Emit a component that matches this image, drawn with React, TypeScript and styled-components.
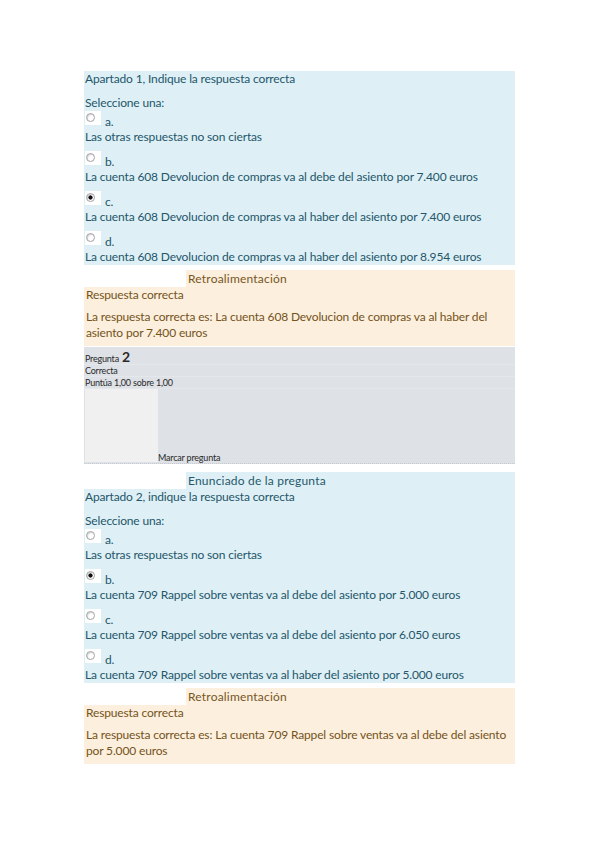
import styled, { createGlobalStyle } from "styled-components";

const GlobalStyle = createGlobalStyle`
  html, body {
    margin: 0;
    padding: 0;
    background: #ffffff;
  }
  body {
    font-family: Lato, "Open Sans", "Liberation Sans", sans-serif;
  }
`;

interface IOption {
  letter: string;
  text: string;
  checked?: boolean;
}

interface IQuestion {
  title: string;
  options: IOption[];
  answer: string[];
}

const Page = styled.div`
  width: 431px;
  margin-left: 84px;
  padding-top: 71px;
  padding-bottom: 80px;
`;

const Tab = styled.div<{ $tone: "info" | "feedback" }>`
  margin-left: 102px;
  height: 17px;
  line-height: 18px;
  padding-left: 2px;
  font-size: 12px;
  letter-spacing: 0.2px;
  color: ${(p) => (p.$tone === "info" ? "#27586a" : "#77561f")};
  background: ${(p) => (p.$tone === "info" ? "#def0f6" : "#fcefdd")};
`;

const Formulation = styled.div`
  background: #def0f6;
  color: #24566a;
  font-size: 12px;
  line-height: 16px;
  letter-spacing: -0.15px;
  padding: 0 2px 0 1px;
`;

const Prompt = styled.p`
  margin: 0 0 8px;
`;

const SelectLabel = styled.p`
  margin: 0;
`;

const Option = styled.div`
  margin-bottom: 6px;

  &:last-child {
    margin-bottom: 0;
  }
`;

const OptionHead = styled.div`
  display: flex;
  align-items: flex-start;
  height: 18px;
`;

const RadioBox = styled.span`
  width: 16px;
  height: 14px;
  background: #ffffff;
  display: flex;
  align-items: center;
  padding-left: 1px;
  box-sizing: border-box;
`;

const Radio = styled.span<{ $checked?: boolean }>`
  width: 7px;
  height: 7px;
  margin-top: -2px;
  border-radius: 50%;
  border: 1px solid #a3a3a3;
  background: radial-gradient(
    circle,
    ${(p) => (p.$checked ? "#111 0, #111 1.8px, #fff 2.4px" : "#fff 0")}
  );
  box-shadow: inset 1px 1px 1px rgba(0, 0, 0, 0.18);
`;

const Letter = styled.span`
  margin: 3px 0 0 4px;
`;

const OptionText = styled.div`
  white-space: nowrap;
`;

const Feedback = styled.div`
  background: #fcefdd;
  color: #74531c;
  font-size: 12px;
  line-height: 16px;
  padding: 0 2px 5px 2px;
`;

const FeedbackLine = styled.p<{ $last?: boolean }>`
  margin: 0 0 ${(p) => (p.$last ? 0 : 6)}px;
  white-space: nowrap;
  letter-spacing: -0.15px;
`;

const Gap = styled.div<{ $h: number }>`
  height: ${(p) => p.$h}px;
`;

const Info = styled.div`
  background: #dee1e6;
  color: #2a2a2a;
  font-size: 9px;
  letter-spacing: -0.2px;
  border-bottom: 1px dotted #c5cad1;
`;

const InfoRow = styled.div<{ $tall?: boolean }>`
  height: ${(p) => (p.$tall ? 17 : 11)}px;
  line-height: 11px;
  padding-left: 1px;
  border-bottom: 1px solid #e4e7eb;
  display: flex;
  align-items: flex-end;
`;

const QNumber = styled.span`
  font-size: 14px;
  font-weight: 700;
  margin-left: 3px;
  line-height: 14px;
`;

const FlagArea = styled.div`
  display: flex;
  align-items: flex-end;
  padding: 0 0 1px 1px;
`;

const FlagBox = styled.div`
  width: 73px;
  height: 73px;
  background: #f0f0f0;
`;

const FlagLabel = styled.span`
  line-height: 8px;
`;

const q1: IQuestion = {
  title: "Apartado 1, Indique la respuesta correcta",
  options: [
    { letter: "a.", text: "Las otras respuestas no son ciertas" },
    {
      letter: "b.",
      text: "La cuenta 608 Devolucion de compras va al debe del asiento por 7.400 euros",
    },
    {
      letter: "c.",
      text: "La cuenta 608 Devolucion de compras va al haber del asiento por 7.400 euros",
      checked: true,
    },
    {
      letter: "d.",
      text: "La cuenta 608 Devolucion de compras va al haber del asiento por 8.954 euros",
    },
  ],
  answer: [
    "La respuesta correcta es: La cuenta 608 Devolucion de compras va al haber del",
    "asiento por 7.400 euros",
  ],
};

const q2: IQuestion = {
  title: "Apartado 2, indique la respuesta correcta",
  options: [
    { letter: "a.", text: "Las otras respuestas no son ciertas" },
    {
      letter: "b.",
      text: "La cuenta 709 Rappel sobre ventas va al debe del asiento por 5.000 euros",
      checked: true,
    },
    {
      letter: "c.",
      text: "La cuenta 709 Rappel sobre ventas va al debe del asiento por 6.050 euros",
    },
    {
      letter: "d.",
      text: "La cuenta 709 Rappel sobre ventas va al haber del asiento por 5.000 euros",
    },
  ],
  answer: [
    "La respuesta correcta es: La cuenta 709 Rappel sobre ventas va al debe del asiento",
    "por 5.000 euros",
  ],
};

function QuestionBody({ question }: { question: IQuestion }) {
  return (
    <Formulation>
      <Prompt>{question.title}</Prompt>
      <SelectLabel>Seleccione una:</SelectLabel>
      {question.options.map((option) => (
        <Option key={option.letter}>
          <OptionHead>
            <RadioBox>
              <Radio $checked={option.checked} />
            </RadioBox>
            <Letter>{option.letter}</Letter>
          </OptionHead>
          <OptionText>{option.text}</OptionText>
        </Option>
      ))}
    </Formulation>
  );
}

function FeedbackBlock({ question }: { question: IQuestion }) {
  return (
    <>
      <Tab $tone="feedback">Retroalimentación</Tab>
      <Feedback>
        <FeedbackLine>Respuesta correcta</FeedbackLine>
        <FeedbackLine $last>
          {question.answer[0]}
          <br />
          {question.answer[1]}
        </FeedbackLine>
      </Feedback>
    </>
  );
}

function App() {
  return (
    <>
      <GlobalStyle />
      <Page>
        <QuestionBody question={q1} />
        <Gap $h={5} />
        <FeedbackBlock question={q1} />
        <Gap $h={1} />
        <Info>
          <InfoRow $tall>
            Pregunta<QNumber>2</QNumber>
          </InfoRow>
          <InfoRow>Correcta</InfoRow>
          <InfoRow>Puntúa 1,00 sobre 1,00</InfoRow>
          <FlagArea>
            <FlagBox />
            <FlagLabel>Marcar pregunta</FlagLabel>
          </FlagArea>
        </Info>
        <Gap $h={8} />
        <Tab $tone="info">Enunciado de la pregunta</Tab>
        <QuestionBody question={q2} />
        <Gap $h={5} />
        <FeedbackBlock question={q2} />
      </Page>
    </>
  );
}

export default App;
